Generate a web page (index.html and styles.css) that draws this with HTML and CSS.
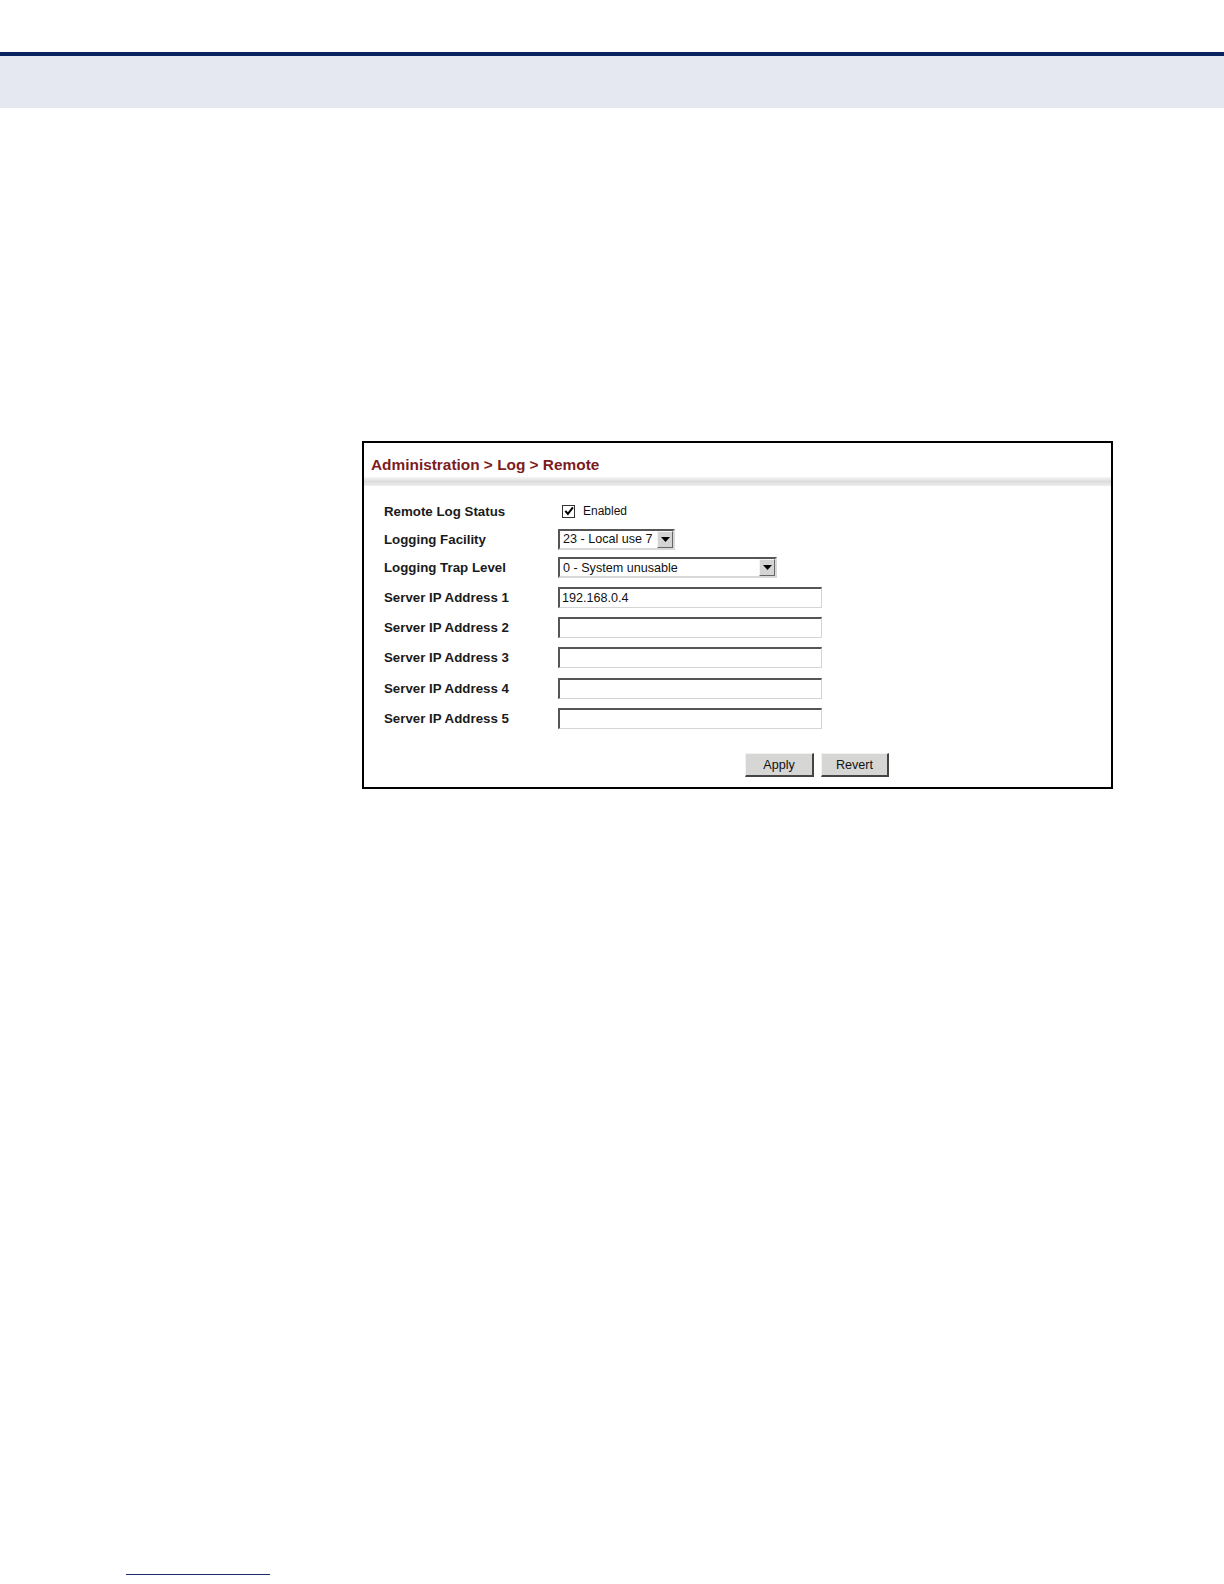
FILE: index.html
```html
<!DOCTYPE html>
<html>
<head>
<meta charset="utf-8">
<link rel="stylesheet" href="styles.css">
</head>
<body>
<div class="header"></div>
<div class="panel">
  <div class="title">Administration &gt; Log &gt; Remote</div>
  <div class="rule"></div>
  <div class="form">
    <div class="row h28">
      <div class="label">Remote Log Status</div>
      <div class="ctrl"><span class="check"><svg width="10" height="10" viewBox="0 0 10 10"><path d="M1.3 4.8 L3.9 7.9 L8.9 1.4" fill="none" stroke="#000" stroke-width="2"/></svg></span><span class="val">Enabled</span></div>
    </div>
    <div class="row h28">
      <div class="label">Logging Facility</div>
      <div class="ctrl"><div class="select s1"><span class="stext">23 - Local use 7</span><span class="arrow"><svg width="9" height="5" viewBox="0 0 9 5"><path d="M0 0 H9 L4.5 5 Z" fill="#000"/></svg></span></div></div>
    </div>
    <div class="row h29">
      <div class="label">Logging Trap Level</div>
      <div class="ctrl"><div class="select s2"><span class="stext">0 - System unusable</span><span class="arrow"><svg width="9" height="5" viewBox="0 0 9 5"><path d="M0 0 H9 L4.5 5 Z" fill="#000"/></svg></span></div></div>
    </div>
    <div class="row h30">
      <div class="label">Server IP Address 1</div>
      <div class="ctrl"><div class="input">192.168.0.4</div></div>
    </div>
    <div class="row h30">
      <div class="label">Server IP Address 2</div>
      <div class="ctrl"><div class="input"></div></div>
    </div>
    <div class="row h31">
      <div class="label">Server IP Address 3</div>
      <div class="ctrl"><div class="input"></div></div>
    </div>
    <div class="row h30">
      <div class="label">Server IP Address 4</div>
      <div class="ctrl"><div class="input"></div></div>
    </div>
    <div class="row h31">
      <div class="label">Server IP Address 5</div>
      <div class="ctrl"><div class="input"></div></div>
    </div>
  </div>
  <div class="buttons">
    <div class="btn b-apply">Apply</div>
    <div class="btn b-revert">Revert</div>
  </div>
</div>
<div class="footline"></div>
</body>
</html>
```
FILE: styles.css
```css
html, body {
  margin: 0;
  padding: 0;
  background: #fff;
  font-family: "Liberation Sans", Arial, sans-serif;
}
.header {
  margin-top: 52px;
  height: 52px;
  border-top: 4px solid #0b2260;
  background: #e5e8f0;
}
.panel {
  margin-top: 333px;
  margin-left: 362px;
  width: 747px;
  height: 344px;
  border: 2px solid #000;
  display: flex;
  flex-direction: column;
}
.title {
  height: 34px;
  line-height: 43px;
  padding-left: 7px;
  font-size: 15.4px;
  font-weight: bold;
  color: #7d1b1f;
  box-sizing: border-box;
}
.rule {
  height: 9px;
  background: linear-gradient(#f7f7f7, #dcdcdc 50%, #efefef);
}
.form {
  padding-top: 11px;
  padding-left: 20px;
  display: flex;
  flex-direction: column;
}
.row {
  display: flex;
  align-items: center;
}
.h28 { height: 28px; }
.h29 { height: 29px; }
.h30 { height: 30px; }
.h31 { height: 31px; }
.label {
  width: 174px;
  font-size: 13.3px;
  font-weight: bold;
  color: #1a1a1a;
}
.ctrl {
  display: flex;
  align-items: center;
  font-size: 12.5px;
  color: #111;
}
.check {
  width: 13px;
  height: 13px;
  margin-left: 4px;
  margin-right: 8px;
  box-sizing: border-box;
  border: 1px solid #333;
  display: flex;
  align-items: center;
  justify-content: center;
  background: #fff;
}
.val { font-size: 12px; }
.select {
  height: 21px;
  box-sizing: border-box;
  border: 2px solid #555;
  border-right-color: #d8d8d8;
  border-bottom-color: #d8d8d8;
  display: flex;
  align-items: center;
  justify-content: space-between;
  background: #fff;
}
.s1 { width: 117px; }
.s2 { width: 219px; }
.stext {
  padding-left: 3px;
  font-size: 12.6px;
  white-space: nowrap;
}
.arrow {
  width: 16px;
  height: 17px;
  box-sizing: border-box;
  background: #d4d4d4;
  border: 1px solid #f4f4f4;
  border-right-color: #666;
  border-bottom-color: #666;
  display: flex;
  align-items: center;
  justify-content: center;
}
.input {
  width: 264px;
  height: 21px;
  box-sizing: border-box;
  border: 2px solid #555;
  border-right: 1px solid #d4d4d4;
  border-bottom: 1px solid #d4d4d4;
  padding-left: 2px;
  font-size: 12.6px;
  line-height: 18px;
  background: #fff;
}
.buttons {
  display: flex;
  gap: 7px;
  margin-left: 381px;
  margin-top: 19px;
}
.btn {
  height: 24px;
  box-sizing: border-box;
  background: #d6d6d4;
  border: 1px solid #f2f2f2;
  border-right: 2px solid #444;
  border-bottom: 2px solid #444;
  font-size: 12.6px;
  color: #111;
  display: flex;
  align-items: center;
  justify-content: center;
}
.b-apply { width: 69px; }
.b-revert { width: 68px; }
.footline {
  margin-top: 785px;
  margin-left: 126px;
  width: 144px;
  height: 1px;
  background: #1a2f6a;
}
```
